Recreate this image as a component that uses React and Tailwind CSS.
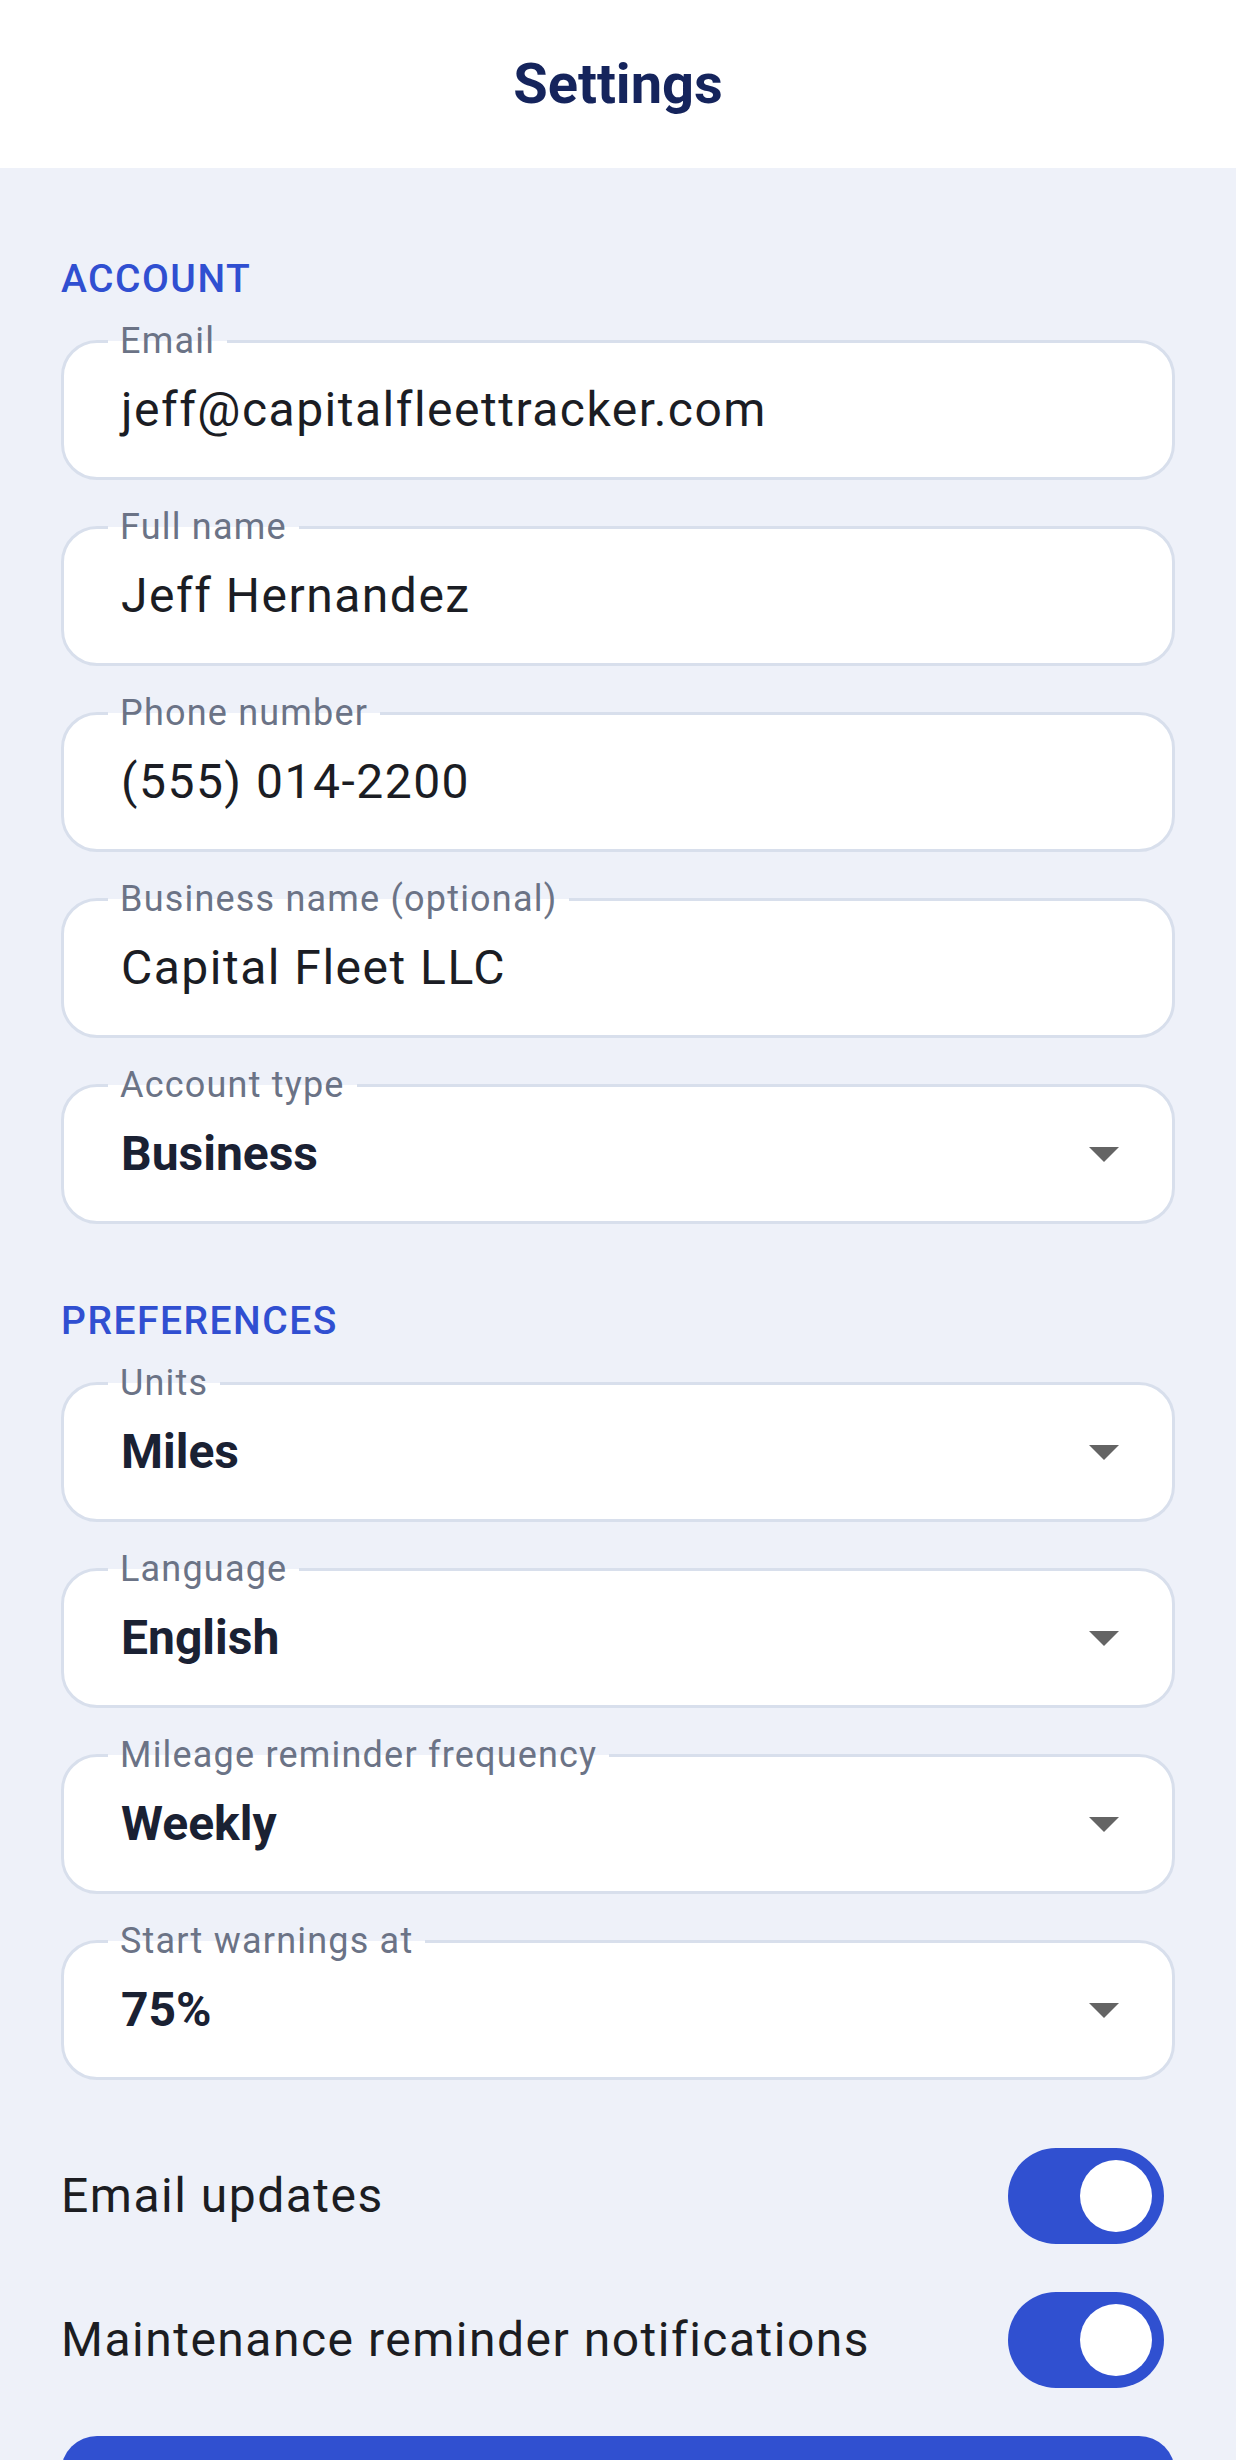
import { useState } from 'react';

const ACCOUNT_FIELDS = [
  { label: 'Email', value: 'jeff@capitalfleettracker.com' },
  { label: 'Full name', value: 'Jeff Hernandez' },
  { label: 'Phone number', value: '(555) 014-2200' },
  { label: 'Business name (optional)', value: 'Capital Fleet LLC' },
  { label: 'Account type', value: 'Business', select: true },
];

const PREFERENCE_FIELDS = [
  { label: 'Units', value: 'Miles' },
  { label: 'Language', value: 'English' },
  { label: 'Mileage reminder frequency', value: 'Weekly' },
  { label: 'Start warnings at', value: '75%' },
];

function OutlinedField({ label, value, select }) {
  return (
    <div className="relative h-[140px] rounded-[36px] border-[3px] border-[#d8dfec] bg-white flex items-center pl-[57px] pr-[53px]">
      {/* floating label sits on the top border */}
      <span className="absolute left-[44px] top-[-23px] px-[12px] text-[36px] leading-[42px] tracking-[1.2px] text-[#6b7386] bg-[linear-gradient(to_bottom,#eef1f9_50%,#ffffff_50%)]">
        {label}
      </span>
      <span
        className={`text-[48px] leading-[56px] ${
          select ? 'font-bold text-[#1a2133]' : 'tracking-[1.5px] text-[#1b1d24]'
        }`}
      >
        {value}
      </span>
      {select && (
        <svg className="ml-auto" width="30" height="15" viewBox="0 0 30 15">
          <polygon points="0,0 30,0 15,15" fill="#646464" />
        </svg>
      )}
    </div>
  );
}

function Toggle({ on, onChange }) {
  return (
    <button
      type="button"
      onClick={() => onChange(!on)}
      className={`w-[156px] h-[96px] rounded-full flex items-center px-[12px] ${
        on ? 'bg-[#3050d0] justify-end' : 'bg-[#c9cfdd] justify-start'
      }`}
    >
      <span className="size-[72px] rounded-full bg-white" />
    </button>
  );
}

function SectionTitle({ children, className = '' }) {
  return (
    <h2
      className={`text-[39px] leading-[46px] font-medium tracking-[1.5px] text-[#304fd1] mb-[38px] ${className}`}
    >
      {children}
    </h2>
  );
}

export default function App() {
  const [emailUpdates, setEmailUpdates] = useState(true);
  const [maintenance, setMaintenance] = useState(true);

  return (
    <div className="min-h-screen bg-[#eef1f9] font-[family-name:Roboto,sans-serif]">
      {/* Header */}
      <header className="h-[168px] bg-white flex items-center justify-center">
        <h1 className="text-[56px] font-bold text-[#15245c]">Settings</h1>
      </header>

      <main className="px-[61px] pt-[88px] pb-[60px]">
        <SectionTitle>ACCOUNT</SectionTitle>
        <div className="flex flex-col gap-[46px]">
          {ACCOUNT_FIELDS.map((f) => (
            <OutlinedField key={f.label} {...f} />
          ))}
        </div>

        <SectionTitle className="mt-[74px]">PREFERENCES</SectionTitle>
        <div className="flex flex-col gap-[46px]">
          {PREFERENCE_FIELDS.map((f) => (
            <OutlinedField key={f.label} {...f} select />
          ))}
        </div>

        {/* Notifications */}
        <div className="mt-[68px] flex flex-col gap-[48px]">
          <div className="flex items-center justify-between pr-[11px]">
            <span className="text-[48px] tracking-[1.5px] text-[#1c1d22]">Email updates</span>
            <Toggle on={emailUpdates} onChange={setEmailUpdates} />
          </div>
          <div className="flex items-center justify-between pr-[11px]">
            <span className="text-[48px] tracking-[1.5px] text-[#1c1d22]">
              Maintenance reminder notifications
            </span>
            <Toggle on={maintenance} onChange={setMaintenance} />
          </div>
        </div>

        <button
          type="button"
          className="mt-[48px] w-full h-[144px] rounded-[36px] bg-[#3050d0] text-white text-[48px] font-medium tracking-[1.5px]"
        >
          Save changes
        </button>
      </main>
    </div>
  );
}
